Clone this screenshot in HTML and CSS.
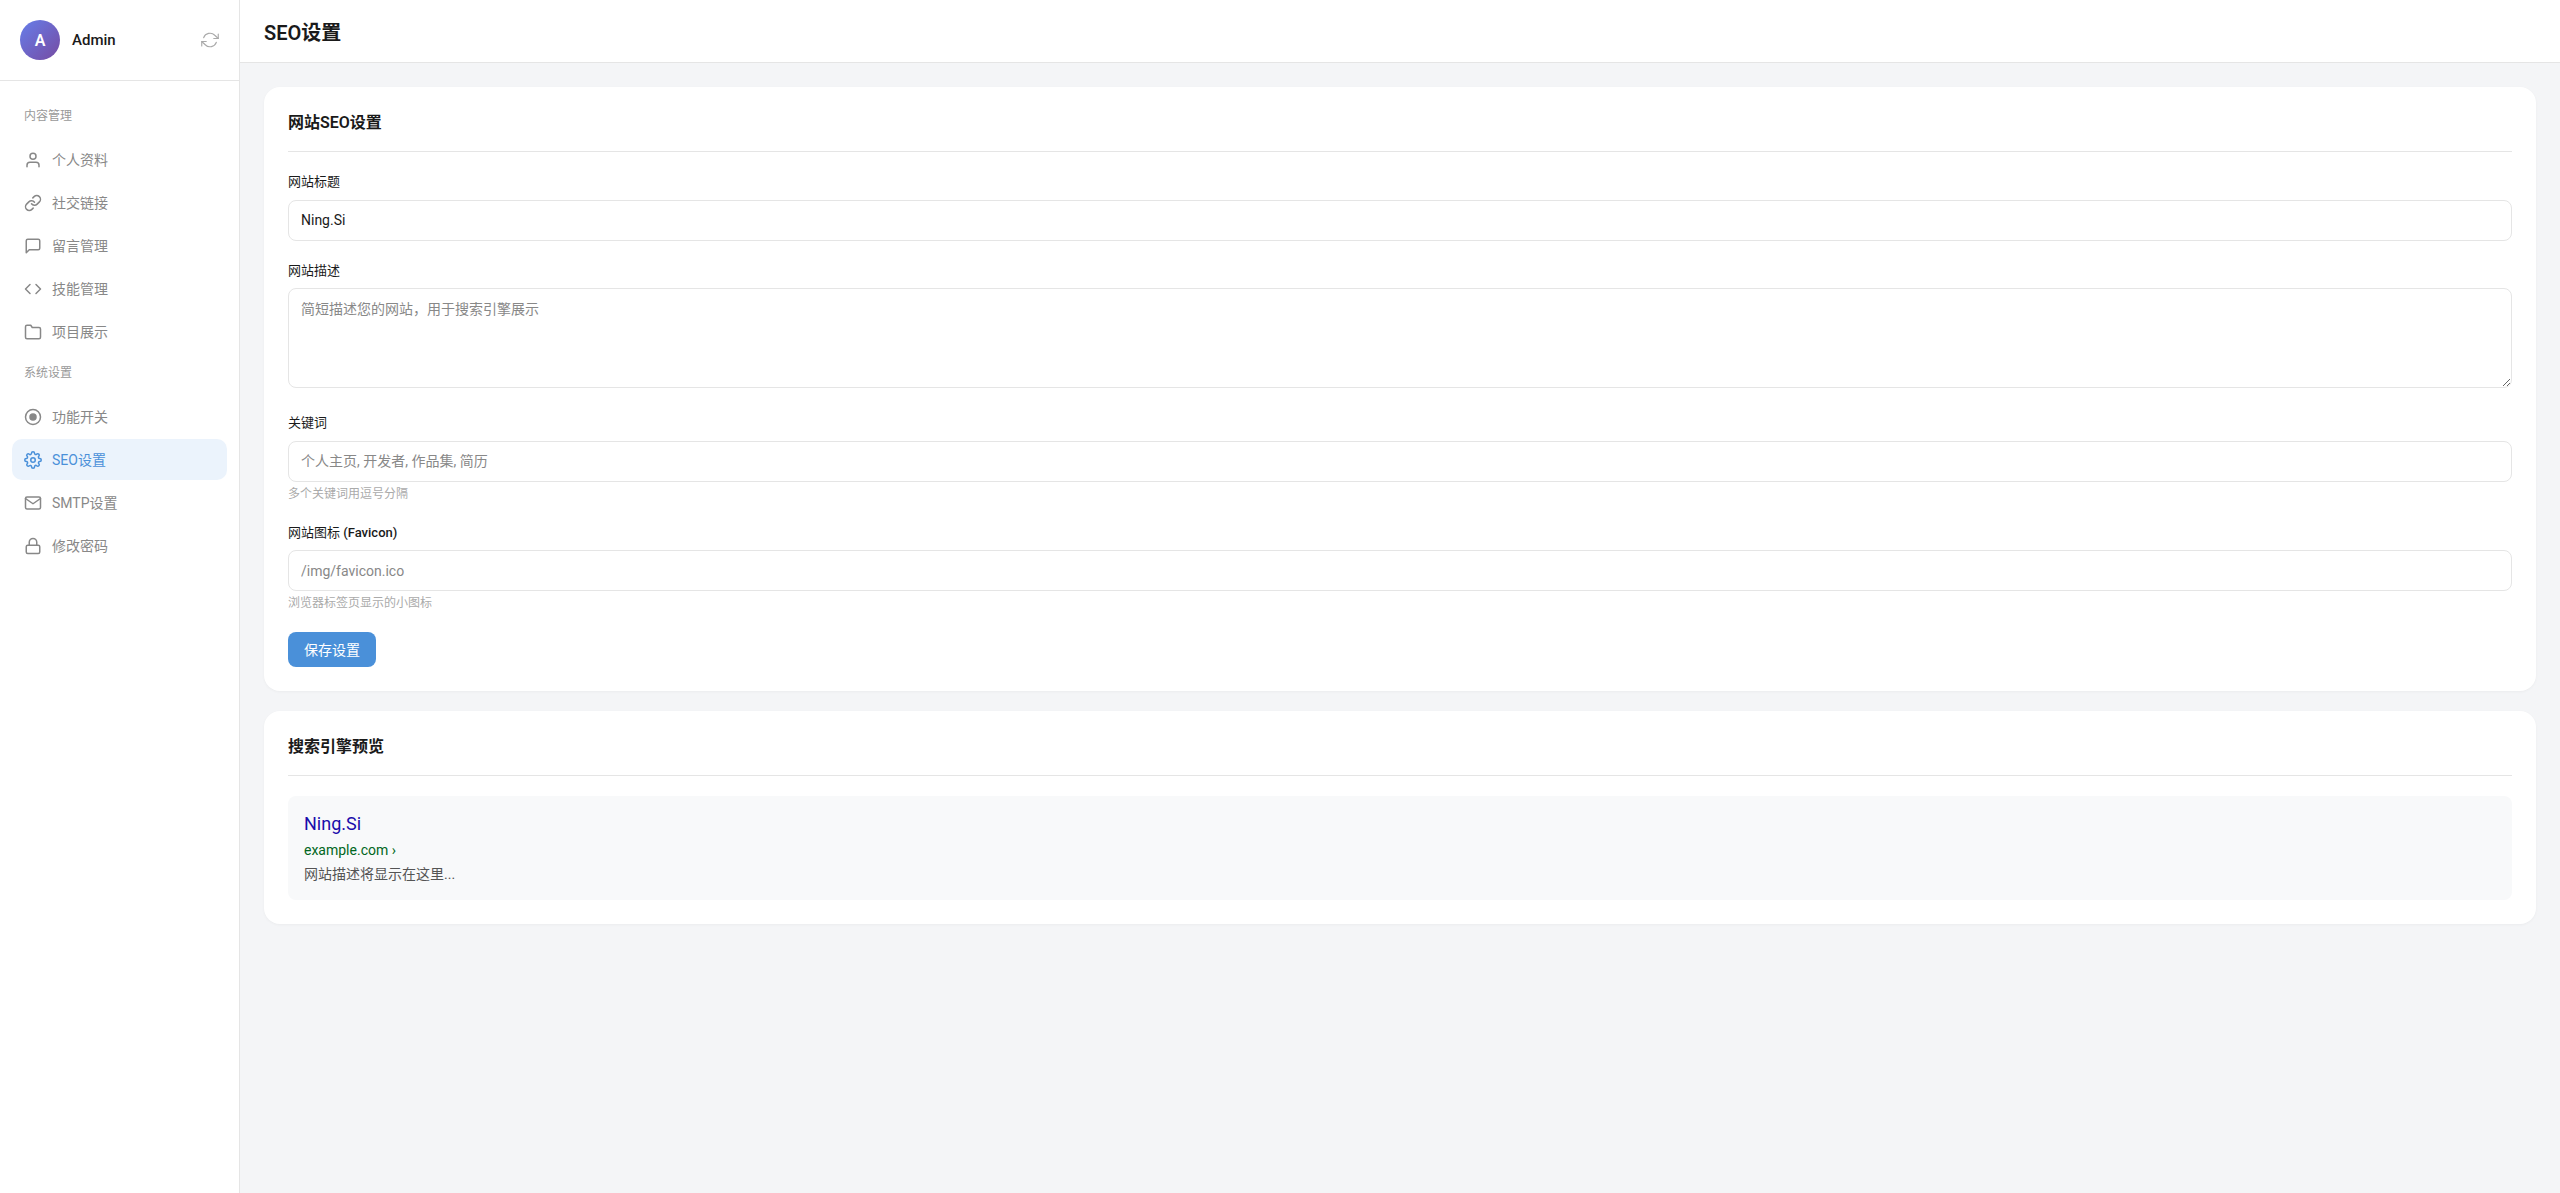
FILE: index.html
```html
<!DOCTYPE html>
<html lang="zh-CN">
<head>
  <meta charset="UTF-8">
  <title>SEO设置</title>
  <link rel="stylesheet" href="styles.css">
</head>
<body>
  <div class="layout">
    <aside class="sidebar">
      <div class="sidebar-header">
        <div class="avatar">A</div>
        <span class="user-name">Admin</span>
        <svg class="refresh-icon" viewBox="0 0 24 24"><path d="M23 4v6h-6"/><path d="M1 20v-6h6"/><path d="M3.51 9a9 9 0 0 1 14.85-3.36L23 10M1 14l4.64 4.36A9 9 0 0 0 20.49 15"/></svg>
      </div>
      <nav class="nav">
        <div class="nav-title">内容管理</div>
        <a class="nav-item"><svg viewBox="0 0 24 24"><path d="M20 21v-2a4 4 0 0 0-4-4H8a4 4 0 0 0-4 4v2"/><circle cx="12" cy="7" r="4"/></svg><span>个人资料</span></a>
        <a class="nav-item"><svg viewBox="0 0 24 24"><path d="M10 13a5 5 0 0 0 7.54.54l3-3a5 5 0 0 0-7.07-7.07l-1.72 1.71"/><path d="M14 11a5 5 0 0 0-7.54-.54l-3 3a5 5 0 0 0 7.07 7.07l1.71-1.71"/></svg><span>社交链接</span></a>
        <a class="nav-item"><svg viewBox="0 0 24 24"><path d="M21 15a2 2 0 0 1-2 2H7l-4 4V5a2 2 0 0 1 2-2h14a2 2 0 0 1 2 2z"/></svg><span>留言管理</span></a>
        <a class="nav-item"><svg viewBox="0 0 24 24"><path d="M16 18l6-6-6-6"/><path d="M8 6l-6 6 6 6"/></svg><span>技能管理</span></a>
        <a class="nav-item"><svg viewBox="0 0 24 24"><path d="M22 19a2 2 0 0 1-2 2H4a2 2 0 0 1-2-2V5a2 2 0 0 1 2-2h5l2 3h9a2 2 0 0 1 2 2z"/></svg><span>项目展示</span></a>
        <div class="nav-title">系统设置</div>
        <a class="nav-item"><svg viewBox="0 0 24 24"><circle cx="12" cy="12" r="10"/><circle class="dot" cx="12" cy="12" r="4"/></svg><span>功能开关</span></a>
        <a class="nav-item active"><svg viewBox="0 0 24 24"><circle cx="12" cy="12" r="3"/><path d="M19.4 15a1.65 1.65 0 0 0 .33 1.82l.06.06a2 2 0 1 1-2.83 2.83l-.06-.06a1.65 1.65 0 0 0-2.82 1.17V21a2 2 0 1 1-4 0v-.09A1.65 1.65 0 0 0 9 19.4a1.65 1.65 0 0 0-1.82.33l-.06.06a2 2 0 1 1-2.83-2.83l.06-.06a1.65 1.65 0 0 0-1.17-2.82H3a2 2 0 1 1 0-4h.09A1.65 1.65 0 0 0 4.6 9a1.65 1.65 0 0 0-.33-1.82l-.06-.06a2 2 0 1 1 2.83-2.83l.06.06A1.65 1.65 0 0 0 9 4.6h.09A1.65 1.65 0 0 0 10 3.09V3a2 2 0 1 1 4 0v.09a1.65 1.65 0 0 0 2.82 1.17l.06-.06a2 2 0 1 1 2.83 2.83l-.06.06A1.65 1.65 0 0 0 19.4 9v.09A1.65 1.65 0 0 0 20.91 10H21a2 2 0 1 1 0 4h-.09A1.65 1.65 0 0 0 19.4 15z"/></svg><span>SEO设置</span></a>
        <a class="nav-item"><svg viewBox="0 0 24 24"><path d="M4 4h16a2 2 0 0 1 2 2v12a2 2 0 0 1-2 2H4a2 2 0 0 1-2-2V6a2 2 0 0 1 2-2z"/><path d="M22 6l-10 7L2 6"/></svg><span>SMTP设置</span></a>
        <a class="nav-item"><svg viewBox="0 0 24 24"><rect x="3" y="11" width="18" height="11" rx="2"/><path d="M7 11V7a5 5 0 0 1 10 0v4"/></svg><span>修改密码</span></a>
      </nav>
    </aside>

    <div class="main">
      <header class="topbar">
        <h1>SEO设置</h1>
      </header>
      <div class="content">
        <section class="card">
          <h2 class="card-title">网站SEO设置</h2>
          <div class="form-group">
            <label>网站标题</label>
            <input type="text" value="Ning.Si">
          </div>
          <div class="form-group">
            <label>网站描述</label>
            <textarea placeholder="简短描述您的网站，用于搜索引擎展示"></textarea>
          </div>
          <div class="form-group">
            <label>关键词</label>
            <input type="text" placeholder="个人主页, 开发者, 作品集, 简历">
            <div class="hint">多个关键词用逗号分隔</div>
          </div>
          <div class="form-group">
            <label>网站图标 <b>(Favicon)</b></label>
            <input type="text" placeholder="/img/favicon.ico">
            <div class="hint">浏览器标签页显示的小图标</div>
          </div>
          <button class="save-btn">保存设置</button>
        </section>

        <section class="card">
          <h2 class="card-title">搜索引擎预览</h2>
          <div class="preview">
            <div class="preview-title">Ning.Si</div>
            <div class="preview-url">example.com ›</div>
            <div class="preview-desc">网站描述将显示在这里...</div>
          </div>
        </section>
      </div>
    </div>
  </div>
</body>
</html>
```

FILE: styles.css
```css
* {
  box-sizing: border-box;
}
body {
  margin: 0;
  font-family: "Roboto", "Noto Sans CJK SC", sans-serif;
  background-color: #f4f5f7;
  color: #1a1a1a;
}
.layout {
  display: flex;
  min-height: 1193px;
}

/* 侧边栏 */
.sidebar {
  width: 240px;
  flex-shrink: 0;
  background-color: #fff;
  border-right: 1px solid #e5e5e5;
}
.sidebar-header {
  height: 81px;
  padding: 0 20px;
  display: flex;
  align-items: center;
  gap: 12px;
  border-bottom: 1px solid #e5e5e5;
}
.avatar {
  width: 40px;
  height: 40px;
  border-radius: 50%;
  background: linear-gradient(135deg, #667eea, #764ba2);
  color: #fff;
  font-size: 16px;
  font-weight: 600;
  display: flex;
  align-items: center;
  justify-content: center;
}
.user-name {
  flex: 1;
  font-size: 15px;
  font-weight: 500;
}
.refresh-icon {
  width: 18px;
  height: 18px;
  fill: none;
  stroke: #aaa;
  stroke-width: 1.5;
  stroke-linecap: round;
  stroke-linejoin: round;
}
.nav {
  padding: 16px 12px 0;
}
.nav-title {
  height: 35px;
  margin-bottom: 7px;
  padding: 0 12px;
  display: flex;
  align-items: center;
  font-size: 12px;
  color: #999;
}
.nav-item {
  height: 41px;
  margin-bottom: 2px;
  padding: 0 12px;
  display: flex;
  align-items: center;
  gap: 10px;
  border-radius: 10px;
  font-size: 14px;
  color: #888;
}
.nav-item span {
  padding-bottom: 2px;
}
.nav-item svg {
  width: 18px;
  height: 18px;
  flex-shrink: 0;
  fill: none;
  stroke: currentColor;
  stroke-width: 2;
  stroke-linecap: round;
  stroke-linejoin: round;
}
.nav-item svg .dot {
  fill: currentColor;
}
.nav-item.active {
  background-color: #ebf3fc;
  color: #4a90d9;
}

/* 主内容 */
.main {
  flex: 1;
  min-width: 0;
}
.topbar {
  height: 63px;
  padding: 0 24px;
  display: flex;
  align-items: center;
  background-color: #fff;
  border-bottom: 1px solid #e5e5e5;
}
.topbar h1 {
  margin: 0;
  font-size: 20px;
  font-weight: 600;
}
.content {
  padding: 24px;
}
.card {
  margin-bottom: 20px;
  padding: 24px;
  background-color: #fff;
  border-radius: 16px;
  box-shadow: 0 1px 3px rgba(0, 0, 0, 0.04);
}
.card-title {
  margin: 0 0 20px;
  padding-bottom: 16px;
  border-bottom: 1px solid #e5e5e5;
  font-size: 16px;
  font-weight: 600;
  line-height: 24px;
}
.form-group {
  margin-bottom: 20px;
}
.form-group label {
  display: block;
  margin-bottom: 8px;
  font-size: 13px;
  line-height: 19.5px;
}
.form-group label b {
  font-weight: 500;
}
.form-group input,
.form-group textarea {
  display: block;
  width: 100%;
  padding: 10px 12px;
  border: 1px solid #e5e5e5;
  border-radius: 8px;
  background-color: #fff;
  font-family: inherit;
  font-size: 14px;
  color: #1a1a1a;
}
.form-group input {
  height: 41px;
}
.form-group textarea {
  height: 100px;
  margin-bottom: 25px;
  padding-top: 9px;
  resize: vertical;
}
.form-group input::placeholder,
.form-group textarea::placeholder {
  color: #888;
}
.hint {
  margin-top: 4px;
  font-size: 12px;
  line-height: 17px;
  color: #aaa;
}
.save-btn {
  display: block;
  width: 88px;
  height: 35px;
  padding: 0 0 2px;
  border: none;
  border-radius: 8px;
  background-color: #4a90d9;
  color: #fff;
  font-family: inherit;
  font-size: 14px;
}

/* 预览 */
.preview {
  padding: 16px;
  border-radius: 8px;
  background-color: #f8f9fa;
}
.preview-title {
  font-size: 18px;
  line-height: 23px;
  color: #1a0dab;
}
.preview-url {
  margin-top: 6px;
  font-size: 14px;
  line-height: 18px;
  color: #006621;
}
.preview-desc {
  margin-top: 5px;
  font-size: 14px;
  line-height: 20px;
  color: #545454;
}
```
